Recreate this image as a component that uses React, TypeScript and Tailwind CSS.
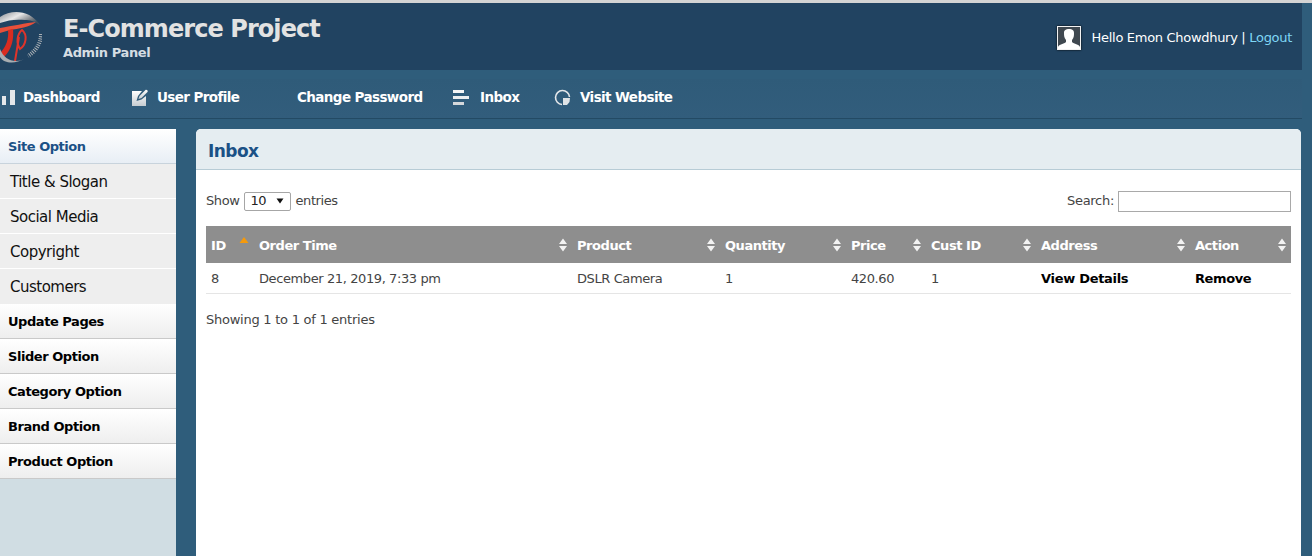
import React from "react";

const body = '"DejaVu Sans", sans-serif';

function Sort({ active }: { active?: boolean }) {
  if (active)
    return (
      <svg width="10" height="12" viewBox="0 0 10 12" className="absolute right-[5px] top-[10px]">
        <path d="M5 1 9.5 7H.5z" fill="#f59a0c" />
      </svg>
    );
  return (
    <svg width="10" height="14" viewBox="0 0 10 14" className="absolute right-[4px] top-[12px]">
      <path d="M5 0.5 9 6H1zM5 13.5 1 8h8z" fill="#f2f2f2" />
    </svg>
  );
}

function Logo() {
  return (
    <svg width="42" height="56" viewBox="0 8 42 56" className="shrink-0">
      <defs>
        <linearGradient id="silver" x1="0" y1="0" x2="1" y2="0.6">
          <stop offset="0" stopColor="#8a8f94" />
          <stop offset="0.45" stopColor="#e8e8e8" />
          <stop offset="0.8" stopColor="#7d8287" />
          <stop offset="1" stopColor="#3e5060" />
        </linearGradient>
      </defs>
      <path d="M0 16C12 8 30 9 40 24 34 20 30 19 25 19 16 18 8 19 0 22z" fill="url(#silver)" />
      <path d="M0 27C12 25 26 22 36 21 30 26 18 28 10 29L0 32z" fill="#e8503a" />
      <path d="M8 29 13 28C14 38 12 48 4 56L0 56V52C6 46 9 38 8 29z" fill="#d92c20" />
      <path d="M22 29C17 33 16 42 20 48 26 44 28 34 22 29zM19 36 15 60" fill="none" stroke="#e0342a" strokeWidth="2" />
      <path d="M0 48C3 56 9 60 16 60 20 60 22 59 24 58 16 63 4 63 0 56z" fill="#a9adb1" />
      <path d="M41 33C41 42 36 50 28 55" fill="none" stroke="#aab0b5" strokeWidth="4" strokeDasharray="1 1.2" />
    </svg>
  );
}

function ChartIcon() {
  return (
    <svg width="14" height="18" viewBox="0 0 14 18">
      <rect x="0" y="7" width="4" height="9" fill="#e4e7ea" />
      <rect x="8" y="1" width="5" height="15" fill="#e4e7ea" />
    </svg>
  );
}
function EditIcon() {
  return (
    <svg width="18" height="19" viewBox="0 0 18 19">
      <defs>
        <linearGradient id="pad" x1="0" y1="0" x2="0" y2="1">
          <stop offset="0" stopColor="#ffffff" />
          <stop offset="1" stopColor="#c6ccd1" />
        </linearGradient>
      </defs>
      <path d="M1 3h10L7 8l-1.5 5 5-1.5L15 8v10H1z" fill="url(#pad)" />
      <path d="M7.5 11l1-3 6-6c1-1 3 1 2 2l-6 6z" fill="url(#pad)" />
    </svg>
  );
}
function ListIcon() {
  return (
    <svg width="16" height="16" viewBox="0 0 16 16">
      <rect x="0" y="0" width="11" height="3" fill="#f4f5f6" />
      <rect x="0" y="6" width="16" height="3" fill="#eceef0" />
      <rect x="0" y="12" width="11" height="3" fill="#d5d8db" />
    </svg>
  );
}
function PieIcon() {
  return (
    <svg width="17" height="17" viewBox="0 0 17 17">
      <path d="M8 15.5A7 7 0 1 1 15.5 8" fill="none" stroke="#e4e7ea" strokeWidth="1.6" />
      <path d="M9 9h7l-.5 4-2.5 3H9z" fill="#dfe3e6" />
    </svg>
  );
}
function UserIcon() {
  return (
    <svg width="24" height="24" viewBox="0 0 24 24" className="shadow-[0_0_2px_#000]">
      <rect width="24" height="24" fill="#f2f2f2" />
      <rect x="1" y="1" width="22" height="22" fill="#3f4850" />
      <path d="M1 23v-2c1-3 6-3 8-5v-2C7 12 7 9 7 7c0-3 2-4 5-4s5 1 5 4c0 2 0 5-2 7v2c2 2 7 2 8 5v2z" fill="#fff" />
    </svg>
  );
}

const nav = [
  { icon: <ChartIcon />, label: "Dashboard", w: "w-[129px]", gap: "gap-[7px]" },
  { icon: <EditIcon />, label: "User Profile", w: "w-[166px]", gap: "gap-2" },
  { icon: null, label: "Change Password", w: "w-[156px]", gap: "" },
  { icon: <ListIcon />, label: "Inbox", w: "w-[101px]", gap: "gap-[11px]" },
  { icon: <PieIcon />, label: "Visit Website", w: "w-auto", gap: "gap-[9px]" },
];

const subItems = ["Title & Slogan", "Social Media", "Copyright", "Customers"];
const mainItems = ["Update Pages", "Slider Option", "Category Option", "Brand Option", "Product Option"];

const columns = [
  { label: "ID", w: "w-[48px]", active: true },
  { label: "Order Time", w: "w-[318px]" },
  { label: "Product", w: "w-[148px]" },
  { label: "Quantity", w: "w-[126px]" },
  { label: "Price", w: "w-[80px]" },
  { label: "Cust ID", w: "w-[110px]" },
  { label: "Address", w: "w-[154px]" },
  { label: "Action", w: "w-[101px]" },
];

export default function App() {
  return (
    <div className="h-[556px] w-[1312px] overflow-hidden bg-[#2f5d7b] flex flex-col" style={{ fontFamily: body }}>
      <div className="h-[3px] shrink-0 bg-[#d4d4d4]" />
      <header className="h-[67px] w-[1302px] shrink-0 bg-[#214361] flex items-center justify-between">
        <div className="flex items-center gap-[21px]">
          <Logo />
          <div className="mt-[2px]">
            <div className="text-[24px] leading-[28px] font-bold text-[#e2e2e2] tracking-[-0.93px]">E-Commerce Project</div>
            <div className="mt-[1px] text-[13px] leading-[17px] font-bold text-[#d5dde3] tracking-[-0.4px]">Admin Panel</div>
          </div>
        </div>
        <div className="flex items-center mr-[10px] mt-[3px]">
          <UserIcon />
          <span className="ml-[11px] text-[13px] text-white tracking-[-0.3px] whitespace-pre">Hello Emon Chowdhury | </span>
          <span className="text-[13px] text-[#7fd6f5] tracking-[-0.3px]">Logout</span>
        </div>
      </header>
      <div className="h-[9px] shrink-0" />
      <nav className="h-[40px] w-[1302px] shrink-0 border-b border-[#234a64] bg-gradient-to-b from-[#2f5b79] to-[#325d7c] flex items-center pl-[2px] pb-[2px]">
        {nav.map((n) => (
          <div key={n.label} className={`flex items-center ${n.gap} ${n.w}`}>
            {n.icon}
            <span className="text-[13.5px] font-bold text-white tracking-[-0.6px] whitespace-nowrap">{n.label}</span>
          </div>
        ))}
      </nav>
      <div className="h-[10px] shrink-0" />
      <div className="flex-1 min-h-0 flex">
        <aside className="w-[176px] shrink-0 bg-[#d0dde3]">
          <div className="h-[35px] border-b border-[#c8d3dc] bg-gradient-to-b from-white to-[#e8eef5] flex items-center pl-2 pt-[2px] text-[13px] font-bold text-[#1b5186] tracking-[-0.45px]">
            Site Option
          </div>
          {subItems.map((s, i) => (
            <div
              key={s}
              className={`h-[35px] bg-[#eeeeee] flex items-center pl-[10px] pt-[2px] text-[15px] text-[#111] tracking-[-0.5px] ${i < 3 ? "border-b border-white" : ""}`}
            >
              {s}
            </div>
          ))}
          {mainItems.map((s) => (
            <div
              key={s}
              className="h-[35px] border-b border-[#c9c9c9] bg-gradient-to-b from-white to-[#eeeeee] flex items-center pl-2 pt-[2px] text-[13px] font-bold text-black tracking-[-0.45px]"
            >
              {s}
            </div>
          ))}
        </aside>
        <main className="ml-[20px] w-[1105px] shrink-0 bg-white rounded-t-[5px] overflow-hidden">
          <div className="h-[41px] bg-[#e5edf1] border-b border-[#b7ccd6] flex items-center pl-3 pt-[5px] text-[17px] font-bold text-[#1b5186] tracking-[-0.55px]">
            Inbox
          </div>
          <div className="px-[10px]">
            <div className="h-[56px] flex items-center justify-between text-[13px] text-[#444] tracking-[-0.4px] pt-[6px]">
              <div className="flex items-center">
                Show
                <span className="ml-[5px] mr-[4px] w-[47px] h-[19px] border border-[#a6a6a6] rounded-[2px] flex items-center justify-between pl-[5px] pr-[6px] text-[#222]">
                  10
                  <svg width="8" height="6" viewBox="0 0 8 6">
                    <path d="M0.5 0.5h7L4 5.5z" fill="#111" />
                  </svg>
                </span>
                entries
              </div>
              <div className="flex items-center tracking-[-0.3px]">
                Search:
                <span className="ml-[4px] w-[173px] h-[21px] border border-[#a9a9a9] bg-white" />
              </div>
            </div>
            <table className="w-[1085px] table-fixed border-collapse">
              <thead>
                <tr className="bg-[#8e8e8e] h-[37px]">
                  {columns.map((c) => (
                    <th
                      key={c.label}
                      className={`${c.w} relative pl-[5px] pt-[2px] text-left text-[13px] font-bold text-white tracking-[-0.45px]`}
                    >
                      {c.label}
                      <Sort active={c.active} />
                    </th>
                  ))}
                </tr>
              </thead>
              <tbody>
                <tr className="h-[30px] border-b border-[#e5e5e5] text-[13px] text-[#444] tracking-[-0.4px]">
                  <td className="pl-[5px] pt-[1px]">8</td>
                  <td className="pl-[5px] pt-[1px]">December 21, 2019, 7:33 pm</td>
                  <td className="pl-[5px] pt-[1px]">DSLR Camera</td>
                  <td className="pl-[5px] pt-[1px]">1</td>
                  <td className="pl-[5px] pt-[1px]">420.60</td>
                  <td className="pl-[5px] pt-[1px]">1</td>
                  <td className="pl-[5px] pt-[1px] text-[13px] font-bold text-black tracking-[-0.3px]">View Details</td>
                  <td className="pl-[5px] pt-[1px] text-[13px] font-bold text-black tracking-[-0.4px]">Remove</td>
                </tr>
              </tbody>
            </table>
            <div className="mt-[16px] text-[13px] text-[#444] tracking-[-0.25px]">Showing 1 to 1 of 1 entries</div>
          </div>
        </main>
      </div>
    </div>
  );
}
